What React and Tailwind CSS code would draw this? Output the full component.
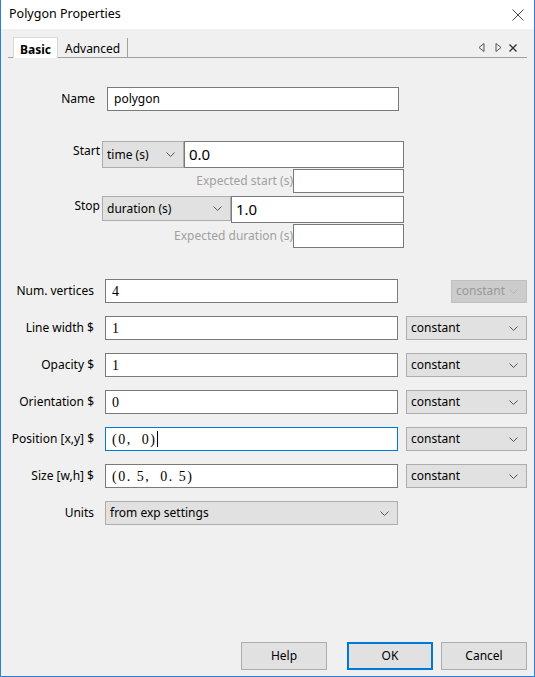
import React from 'react'

const Chevron = ({ color = '#444' }) => (
  <svg width="9" height="5" viewBox="0 0 9 5" className="shrink-0">
    <path d="M0.5 0.5 L4.5 4.5 L8.5 0.5" stroke={color} fill="none" strokeWidth="1" />
  </svg>
)

const Select = ({ label, className = '', disabled = false }) => (
  <div
    className={`flex items-center justify-between pl-[4px] pr-[8px] border ${
      disabled ? 'bg-[#cccccc] border-[#bfbfbf] text-[#999999]' : 'bg-[#e1e1e1] border-[#adadad] text-black'
    } ${className}`}
  >
    <span className="text-[12px] leading-none">{label}</span>
    <Chevron color={disabled ? '#b5b5b5' : '#555'} />
  </div>
)

const TextBox = ({ children, className = '', focus = false }) => (
  <div
    className={`flex items-center bg-white border ${focus ? 'border-[#0078d7]' : 'border-[#7a7a7a]'} ${className}`}
  >
    {children}
  </div>
)

const ParamRow = ({ label, value, tuple = false, focus = false, top = 'mt-[13px]', select = 'normal' }) => (
  <div className={`flex items-center h-[24px] ${top}`}>
    <div className="w-[93px] text-right text-[12px]">{label}</div>
    <TextBox focus={focus} className="ml-[11px] w-[293px] h-[24px] pl-[6px]">
      <span
        className={`font-['Liberation_Serif',serif] text-[14px] whitespace-pre ${tuple ? 'tracking-[1.5px]' : ''}`}
      >
        {value}
      </span>
      {focus && <span className="ml-[1px] w-px h-[16px] bg-black" />}
    </TextBox>
    {select === 'normal' && <Select label="constant" className="ml-auto mr-[7px] w-[121px] h-[24px]" />}
    {select === 'disabled' && <Select label="constant" disabled className="ml-auto mr-[7px] w-[76px] h-[23px]" />}
  </div>
)

export default function App() {
  return (
    <div className="w-[535px] h-[677px] flex flex-col bg-[#f0f0f0] border-l border-r border-b border-[#2b7fd4] font-['Noto_Sans',sans-serif] text-black">
      {/* title bar */}
      <div className="h-[29px] bg-white flex items-center justify-between pl-[8px] pr-[10px] shrink-0">
        <span className="text-[12.5px]">Polygon Properties</span>
        <svg width="12" height="12" viewBox="0 0 12 12">
          <path d="M0.5 0.5 L11.5 11.5 M11.5 0.5 L0.5 11.5" stroke="#333" strokeWidth="0.9" />
        </svg>
      </div>

      {/* tab bar */}
      <div className="pt-[9px] px-[7px] shrink-0">
        <div className="flex items-end h-[20px] border-b border-[#a0a0a0]">
          <div className="ml-[5px] h-[21px] -mb-px bg-white border-l border-t border-r border-[#d9d9d9] px-[6px] flex items-end text-[12px] leading-[17px] font-bold">
            Basic
          </div>
          <div className="h-[19px] px-[7px] flex items-end text-[12px] leading-[16px] border-r border-[#a0a0a0]">Advanced</div>
          <div className="ml-auto mr-[10px] mb-[5px] flex items-center gap-[10px]">
            <svg width="7" height="9" viewBox="0 0 7 9">
              <path d="M6 0.5 L1 4.5 L6 8.5 Z" stroke="#555" fill="none" />
            </svg>
            <svg width="7" height="9" viewBox="0 0 7 9">
              <path d="M1 0.5 L6 4.5 L1 8.5 Z" stroke="#555" fill="none" />
            </svg>
            <svg width="8" height="8" viewBox="0 0 8 8" className="-ml-[3px]">
              <path d="M0.5 0.5 L7.5 7.5 M7.5 0.5 L0.5 7.5" stroke="#333" strokeWidth="1.4" />
            </svg>
          </div>
        </div>
      </div>

      {/* form */}
      <div className="flex-1 flex flex-col">
        <div className="flex items-center h-[24px] mt-[29px]">
          <div className="w-[94px] text-right text-[12px]">Name</div>
          <TextBox className="ml-[12px] w-[292px] h-[24px] pl-[6px]">
            <span className="text-[12px]">polygon</span>
          </TextBox>
        </div>

        {/* start */}
        <div className="flex items-start mt-[30px]">
          <div className="w-[99px] text-right text-[12px] leading-none pt-[4px]">Start</div>
          <Select label="time (s)" className="ml-[2px] w-[82px] h-[27px]" />
          <TextBox className="w-[220px] h-[27px] pl-[4px]">
            <span className="text-[15px]">0.0</span>
          </TextBox>
        </div>
        <div className="flex items-center mt-[1px] h-[24px]">
          <div className="w-[292px] text-right text-[12px] text-[#a0a0a0]">Expected start (s)</div>
          <TextBox className="w-[111px] h-[24px]" />
        </div>

        {/* stop */}
        <div className="flex items-start mt-[3px]">
          <div className="w-[99px] text-right text-[12px] leading-none pt-[4px]">Stop</div>
          <Select label="duration (s)" className="ml-[2px] w-[129px] h-[25px]" />
          <TextBox className="w-[173px] h-[27px] pl-[4px]">
            <span className="text-[15px]">1.0</span>
          </TextBox>
        </div>
        <div className="flex items-center mt-[1px] h-[24px]">
          <div className="w-[292px] text-right text-[12px] text-[#a0a0a0]">Expected duration (s)</div>
          <TextBox className="w-[111px] h-[24px]" />
        </div>

        <ParamRow label="Num. vertices" value="4" top="mt-[31px]" select="disabled" />
        <ParamRow label="Line width $" value="1" />
        <ParamRow label="Opacity $" value="1" />
        <ParamRow label="Orientation $" value="0" />
        <ParamRow label="Position [x,y] $" value="(0,  0)" tuple focus />
        <ParamRow label="Size [w,h] $" value="(0. 5,  0. 5)" tuple />

        <div className="flex items-center h-[24px] mt-[13px]">
          <div className="w-[93px] text-right text-[12px]">Units</div>
          <Select label="from exp settings" className="ml-[11px] w-[293px] h-[24px]" />
        </div>
      </div>

      {/* footer */}
      <div className="flex items-center justify-end pr-[7px] pb-[6px] shrink-0">
        <button className="w-[86px] h-[28px] bg-[#e1e1e1] border border-[#adadad] text-[12px]">Help</button>
        <button className="ml-[20px] w-[86px] h-[28px] bg-[#e1e1e1] border-2 border-[#0078d7] text-[12px]">OK</button>
        <button className="ml-[8px] w-[86px] h-[28px] bg-[#e1e1e1] border border-[#adadad] text-[12px]">Cancel</button>
      </div>
    </div>
  )
}
